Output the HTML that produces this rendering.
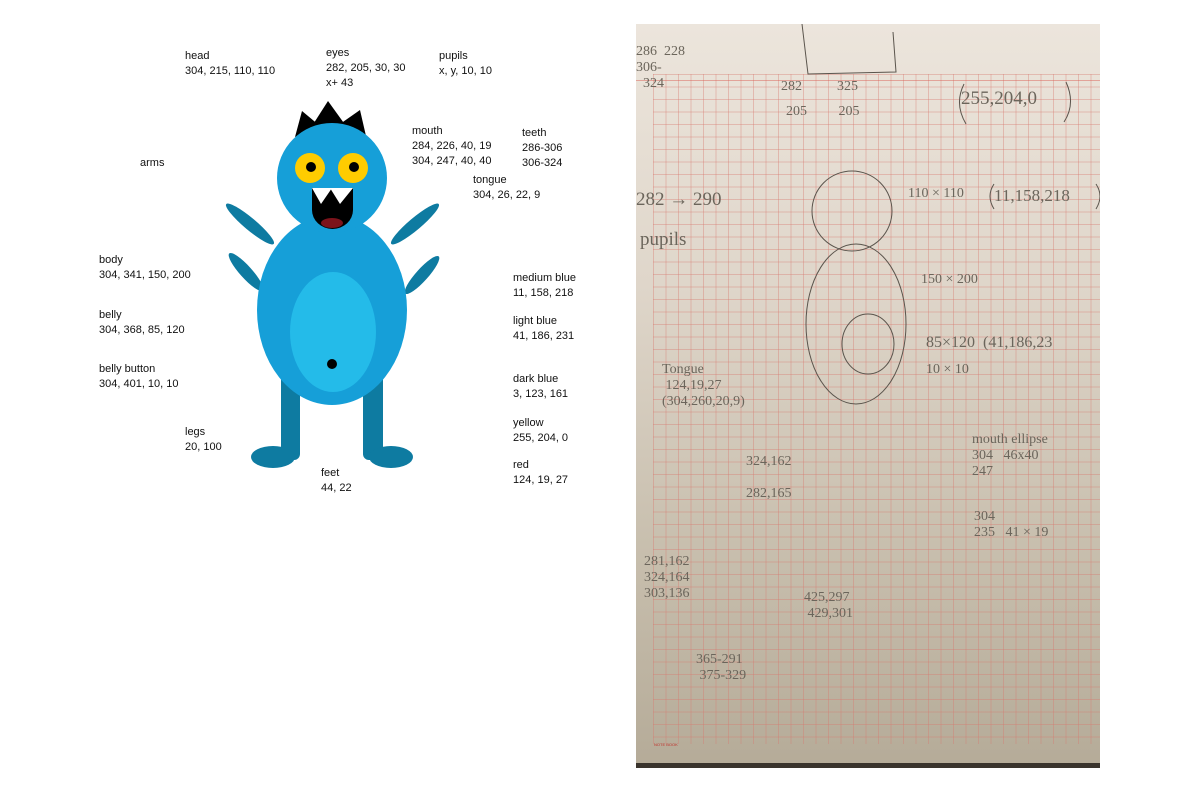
<!DOCTYPE html>
<html><head><meta charset="utf-8"><style>
body{margin:0;width:1200px;height:792px;background:#fff;position:relative;overflow:hidden;font-family:"Liberation Sans",sans-serif;}
.t{position:absolute;font-size:11px;line-height:15px;color:#111;white-space:nowrap}
#photo{position:absolute;left:636px;top:24px;width:464px;height:744px;background:linear-gradient(180deg,#ece5dc 0%,#dfd6ca 35%,#c8bfae 70%,#b5ab98 100%);overflow:hidden}
#grid{position:absolute;left:17px;top:50px;width:447px;height:670px;
background-image:repeating-linear-gradient(90deg,rgba(215,120,110,.38) 0 1px,transparent 1px 12.5px),repeating-linear-gradient(180deg,rgba(215,120,110,.38) 0 1px,transparent 1px 12.5px)}
.h{position:absolute;font-family:"Liberation Serif",serif;color:#6b655b;font-size:14px;white-space:nowrap}
</style></head><body>
<svg width="1200" height="792" style="position:absolute;left:0;top:0">
<g fill="#0e7ba1">
<ellipse cx="250" cy="224" rx="31" ry="6" transform="rotate(40 250 224)"/>
<ellipse cx="246" cy="272" rx="25" ry="6" transform="rotate(48 246 272)"/>
<ellipse cx="415" cy="224" rx="31" ry="6" transform="rotate(-40 415 224)"/>
<ellipse cx="422" cy="275" rx="25" ry="6" transform="rotate(-48 422 275)"/>
<rect x="281" y="370" width="19" height="90" rx="6"/>
<rect x="363" y="370" width="20" height="90" rx="6"/>
<ellipse cx="273" cy="457" rx="22" ry="11"/>
<ellipse cx="391" cy="457" rx="22" ry="11"/>
</g>
<g fill="#000">
<polygon points="295,137 302,111 320,126"/>
<polygon points="312,126 328,101 346,126"/>
<polygon points="340,124 360,110 366,136"/>
</g>
<ellipse cx="332" cy="310" rx="75" ry="95" fill="#169fd8"/>
<circle cx="332" cy="178" r="55" fill="#169fd8"/>
<ellipse cx="333" cy="332" rx="43" ry="60" fill="#24bbe9"/>
<circle cx="332" cy="364" r="5" fill="#000"/>
<circle cx="310" cy="168" r="15" fill="#ffcc00"/>
<circle cx="353" cy="168" r="15" fill="#ffcc00"/>
<circle cx="311" cy="167" r="5" fill="#000"/>
<circle cx="354" cy="167" r="5" fill="#000"/>
<path d="M312 188 H353 V210 A20.5 19 0 0 1 312 210 Z" fill="#000"/>
<ellipse cx="332" cy="223" rx="11" ry="5" fill="#7c131b"/>
<polygon points="312,188 332,188 321,204" fill="#fff"/>
<polygon points="330,188 353,188 340,204" fill="#fff"/>
</svg>
<div class="t" style="left:185px;top:49px">head<br>304, 215, 110, 110</div>
<div class="t" style="left:326px;top:46px">eyes<br>282, 205, 30, 30<br>x+ 43</div>
<div class="t" style="left:439px;top:49px">pupils<br>x, y, 10, 10</div>
<div class="t" style="left:412px;top:124px">mouth<br>284, 226, 40, 19<br>304, 247, 40, 40</div>
<div class="t" style="left:522px;top:126px">teeth<br>286-306<br>306-324</div>
<div class="t" style="left:140px;top:156px">arms</div>
<div class="t" style="left:473px;top:173px">tongue<br>304, 26, 22, 9</div>
<div class="t" style="left:99px;top:253px">body<br>304, 341, 150, 200</div>
<div class="t" style="left:99px;top:308px">belly<br>304, 368, 85, 120</div>
<div class="t" style="left:99px;top:362px">belly button<br>304, 401, 10, 10</div>
<div class="t" style="left:185px;top:425px">legs<br>20, 100</div>
<div class="t" style="left:321px;top:466px">feet<br>44, 22</div>
<div class="t" style="left:513px;top:271px">medium blue<br>11, 158, 218</div>
<div class="t" style="left:513px;top:314px">light blue<br>41, 186, 231</div>
<div class="t" style="left:513px;top:372px">dark blue<br>3, 123, 161</div>
<div class="t" style="left:513px;top:416px">yellow<br>255, 204, 0</div>
<div class="t" style="left:513px;top:458px">red<br>124, 19, 27</div>
<div id="photo">
<div id="grid"></div>
<div style="position:absolute;left:0;top:56px;width:464px;height:1px;background:rgba(220,100,90,.5)"></div>
<div style="position:absolute;left:0;top:739px;width:464px;height:5px;background:#3a342c"></div>
<div style="position:absolute;left:18px;top:718px;font-size:4px;color:#c0302a">NOTE BOOK</div>
<svg width="464" height="744" style="position:absolute;left:0;top:0" fill="none" stroke="#5a544c" stroke-width="1">
<path d="M166 0 L172 50 L260 48 L257 8"/>
<circle cx="216" cy="187" r="40"/>
<ellipse cx="220" cy="300" rx="50" ry="80"/>
<ellipse cx="232" cy="320" rx="26" ry="30"/>
<path d="M328 60 Q318 80 330 100 M430 58 Q440 80 428 98"/>
<path d="M358 160 Q350 172 358 185 M460 160 Q468 172 460 185"/>
</svg>
<div class="h" style="left:0;top:20px">286 &nbsp;228<br>306-<br>&nbsp;&nbsp;324</div>
<div class="h" style="left:145px;top:55px">282&nbsp;&nbsp;&nbsp;&nbsp;&nbsp;&nbsp;&nbsp;&nbsp;&nbsp;&nbsp;325</div>
<div class="h" style="left:150px;top:80px">205&nbsp;&nbsp;&nbsp;&nbsp;&nbsp;&nbsp;&nbsp;&nbsp;&nbsp;205</div>
<div class="h" style="left:325px;top:64px;font-size:19px">255,204,0</div>
<div class="h" style="left:0;top:165px;font-size:19px">282 → 290</div>
<div class="h" style="left:4px;top:205px;font-size:19px">pupils</div>
<div class="h" style="left:272px;top:162px">110 × 110</div>
<div class="h" style="left:358px;top:162px;font-size:17px">11,158,218</div>
<div class="h" style="left:285px;top:248px">150 × 200</div>
<div class="h" style="left:290px;top:310px;font-size:16px">85×120 &nbsp;(41,186,23</div>
<div class="h" style="left:290px;top:338px">10 × 10</div>
<div class="h" style="left:26px;top:338px">Tongue<br>&nbsp;124,19,27<br>(304,260,20,9)</div>
<div class="h" style="left:110px;top:430px">324,162<br><br>282,165</div>
<div class="h" style="left:336px;top:408px">mouth ellipse<br>304 &nbsp;&nbsp;46x40<br>247</div>
<div class="h" style="left:338px;top:485px">304<br>235 &nbsp;&nbsp;41 × 19</div>
<div class="h" style="left:8px;top:530px">281,162<br>324,164<br>303,136</div>
<div class="h" style="left:168px;top:566px">425,297<br>&nbsp;429,301</div>
<div class="h" style="left:60px;top:628px">365-291<br>&nbsp;375-329</div>
</div>
</body></html>
